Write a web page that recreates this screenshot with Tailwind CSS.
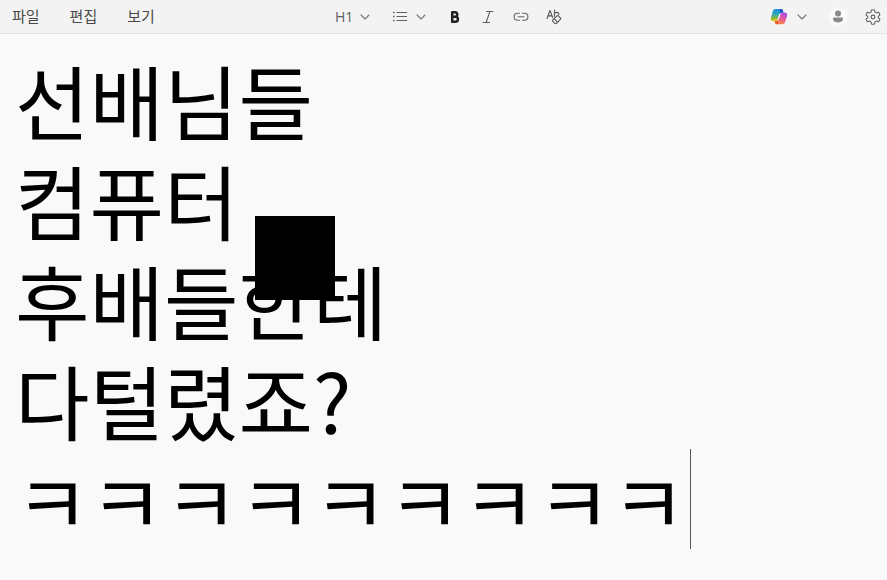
<!DOCTYPE html>
<html lang="ko">
<head>
<meta charset="utf-8">
<meta name="viewport" content="width=device-width, initial-scale=1">
<title>메모장</title>
<script src="https://cdn.jsdelivr.net/npm/@tailwindcss/browser@4"></script>
</head>
<body class="min-h-screen flex flex-col bg-[#f9f9f9] font-['Noto_Sans_CJK_KR',sans-serif] text-black">
<header class="h-[34px] shrink-0 flex items-center justify-between border-b border-[#e3e3e3] bg-[#f3f3f3] pl-3 pr-1.5 text-[#484848]">
  <nav class="flex flex-1 items-center gap-[30px] pb-0.5 text-[15px] leading-5" aria-label="메뉴">
    <button type="button">파일</button>
    <button type="button">편집</button>
    <button type="button">보기</button>
  </nav>
  <div class="flex items-center ml-1" role="toolbar" aria-label="서식">
    <div class="flex items-center mr-[22px]">
      <select aria-label="제목 수준" class="appearance-none w-[25px] h-5 bg-transparent font-['Open_Sans',sans-serif] text-sm leading-5 text-[#606060]"><option>H1</option><option>H2</option><option>H3</option></select>
      <svg class="w-2.5 h-2.5 pointer-events-none" viewBox="0 0 10 10" fill="none" stroke="#777" stroke-width="1.1" stroke-linecap="round" stroke-linejoin="round"><path d="M1 3l4 4 4-4"/></svg>
    </div>
    <button type="button" aria-label="목록" class="flex items-center gap-2 mr-[21px]">
      <svg class="w-4 h-4" viewBox="0 0 16 16" fill="none" stroke="#606060"><path d="M4.5 3.5H15M4.5 7.5H15M4.5 11.5H15" stroke-width="1.1"/><path d="M1 3.5h1.500M1 7.500h1.500M1 11.500h1.500" stroke-width="1.500"/></svg>
      <svg class="w-2.5 h-2.5" viewBox="0 0 10 10" fill="none" stroke="#777" stroke-width="1.1" stroke-linecap="round" stroke-linejoin="round"><path d="M1 3l4 4 4-4"/></svg>
    </button>
    <div class="flex items-center gap-[17px]">
      <button type="button" aria-label="굵게"><svg class="w-4 h-4" viewBox="0 0 16 16" fill="none" stroke="#222" stroke-width="2.5" stroke-linejoin="round"><path d="M5.200 3.200H8a2.200 2.200 0 0 1 0 4.500H5.200zM5.200 7.700h3.200a2.500 2.500 0 0 1 0 5H5.200z"/></svg></button>
      <button type="button" aria-label="기울임꼴"><svg class="w-4 h-4" viewBox="0 0 16 16" fill="none" stroke="#606060" stroke-width="1.1" stroke-linecap="round"><path d="M6.5 2.5H13M3 13.500h6.500M9.900 2.500L6.100 13.500"/></svg></button>
      <button type="button" aria-label="링크"><svg class="w-4 h-4" viewBox="0 0 16 16" fill="none" stroke="#666" stroke-width="1.1" stroke-linecap="round"><path d="M6.500 4.200H4.600a3.500 3.500 0 0 0 0 7h1.900M9.500 4.200h1.900a3.500 3.500 0 0 1 0 7H9.500M5 7.700h6"/></svg></button>
      <button type="button" aria-label="서식 지우기"><svg class="w-4 h-4" viewBox="0 0 16 16" fill="none" stroke="#555" stroke-width="1.1" stroke-linecap="round" stroke-linejoin="round"><path d="M1 9.500L4 1.500l2.700 7M2 6.900h4M8.500 1v6.200M8.500 4.700c1-2 4.400-1.800 4.400.9M6.600 11.200l4.300-4.300a1 1 0 0 1 1.400 0l2.100 2.100a1 1 0 0 1 0 1.400l-3.700 3.700a1.500 1.500 0 0 1-2.100 0l-2-2a.7.7 0 0 1 0-.9zM8.200 9.700l3.400 3.400"/></svg></button>
    </div>
  </div>
  <div class="flex flex-1 items-center justify-end">
    <button type="button" aria-label="Copilot" class="flex items-center gap-[9px] mr-[21px]">
      <svg class="w-[18px] h-[18px]" viewBox="0 0 18 18">
        <defs>
          <linearGradient id="cl" x1="0" y1="0" x2="0" y2="1"><stop stop-color="#168ae0"/><stop offset=".4" stop-color="#2aa6bd"/><stop offset=".7" stop-color="#76b64a"/><stop offset="1" stop-color="#f5cf18"/></linearGradient>
          <linearGradient id="cr" x1=".7" y1="0" x2=".3" y2="1"><stop stop-color="#a24ee5"/><stop offset=".5" stop-color="#ec5b9c"/><stop offset="1" stop-color="#fa903d"/></linearGradient>
        </defs>
        <path fill="url(#cl)" d="M5.700 1h5.200c1.200 0 1.800.8 2.100 1.900l.5 1.600h-1.800c-1.300 0-1.900.6-2.300 1.900L7.800 11c-.5 1.600-1.100 2.200-2.400 2.200H3.200C1.300 13.200.4 11.800.9 10L2.700 3.500C3.200 1.800 4.200 1 5.700 1z"/>
        <path fill="url(#cr)" d="M12.300 16.200H7.100c-1.200 0-1.800-.8-2.100-1.700l-.5-1.300h1.700c1.300 0 1.900-.6 2.300-1.900L10 6.700c.5-1.600 1.200-2.200 2.500-2.200h2.300c1.900 0 2.800 1.500 2.300 3.300L15.300 13.800c-.5 1.600-1.500 2.400-3 2.400z"/>
        <path fill="#1b50cc" d="M9.800 1h1.100c1.200 0 1.800.8 2.100 1.900l.5 1.600h-1.800c-.8 0-1.300.2-1.700.8z"/>
        <path fill="#f0562f" d="M4.500 13.200h1.700c.8 0 1.300-.3 1.700-.8L8.500 16.200H7.100c-1.200 0-1.800-.8-2.100-1.700z"/>
        <path fill="#f3f3f3" d="M9.100 6.200h1.300L8.900 11.200H7.600z"/>
      </svg>
      <svg class="w-2.5 h-2.5" viewBox="0 0 10 10" fill="none" stroke="#777" stroke-width="1.1" stroke-linecap="round" stroke-linejoin="round"><path d="M1 3l4 4 4-4"/></svg>
    </button>
    <button type="button" aria-label="계정" class="mr-[17px]"><svg class="w-5 h-5" viewBox="0 0 20 20"><circle cx="10" cy="9.500" r="9.500" fill="#fafafa"/><circle cx="10" cy="6.500" r="3" fill="#8a8a8a"/><path fill="#8a8a8a" d="M6.200 10.500h7.600c.8 0 1.200.5 1.200 1.200 0 2.500-2 3.800-5 3.800s-5-1.300-5-3.800c0-.7.4-1.200 1.200-1.200z"/></svg></button>
    <button type="button" aria-label="설정"><svg class="w-4 h-4" viewBox="0 0 16 16" fill="none" stroke="#606060" stroke-width="1.100" stroke-linejoin="round"><circle cx="8" cy="8" r="1.900"/><path d="M6.500 1Q8 .6 9.500 1L10 3.100 11.300 3.900 13.400 3.200Q14.500 4.300 14.900 5.800L13.300 7.300V8.700L14.900 10.200Q14.500 11.700 13.400 12.800L11.300 12.100 10 12.900 9.500 15Q8 15.400 6.500 15L6 12.900 4.700 12.100 2.600 12.800Q1.500 11.700 1.100 10.200L2.700 8.700V7.300L1.100 5.800Q1.500 4.300 2.600 3.200L4.700 3.900 6 3.100z"/></svg></button>
  </div>
</header>
<main class="relative flex-1">
  <div role="textbox" aria-multiline="true" aria-label="텍스트 편집기" contenteditable="true" spellcheck="false" class="px-[15px] pt-[15px] text-[81px] leading-[100px] whitespace-nowrap outline-none">
    <h1>선배님들</h1>
    <h1>컴퓨터</h1>
    <h1>후배들한테</h1>
    <h1>다털렸죠?</h1>
    <h1 class="flex gap-1">ㅋㅋㅋㅋㅋㅋㅋㅋㅋ<span class="w-px h-[100px] bg-[#555]"></span></h1>
  </div>
  <div class="absolute left-[255px] top-[182px] w-20 h-[84px] bg-black"></div>
</main>
</body>
</html>
